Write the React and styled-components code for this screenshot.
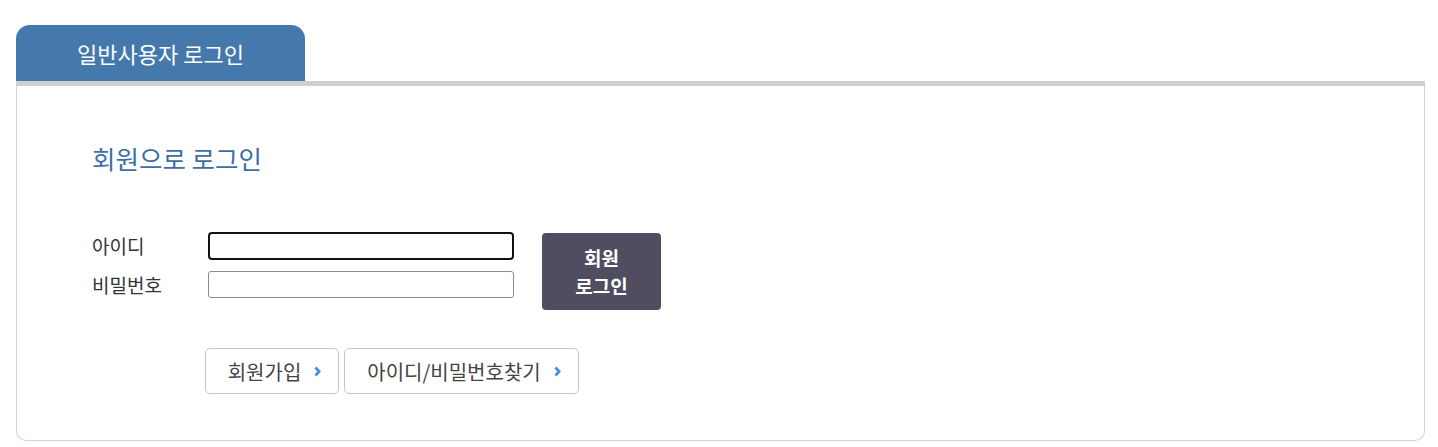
import React from 'react';
import styled, { createGlobalStyle } from 'styled-components';

const GlobalStyle = createGlobalStyle`
  body {
    margin: 0;
    background: #fff;
    font-family: "Noto Sans CJK KR", "Noto Sans", sans-serif;
  }
`;

const Page = styled.div`
  padding: 25px 13px 6px 16px;
`;

const TabBar = styled.div`
  display: flex;
`;

const Tab = styled.div`
  width: 289px;
  height: 56px;
  display: flex;
  align-items: center;
  justify-content: center;
  background: #4579ac;
  color: #fff;
  font-size: 22px;
  border-radius: 14px 14px 0 0;
`;

const Panel = styled.section`
  border: 1px solid #d2d2d2;
  border-top: 5px solid #d0d0d0;
  border-radius: 0 0 10px 10px;
  padding: 57px 0 46px 75px;
`;

const Heading = styled.h2`
  margin: 0;
  font-size: 25.5px;
  line-height: 30px;
  font-weight: normal;
  color: #3d6ea6;
`;

const Form = styled.form`
  display: flex;
  align-items: flex-start;
  margin-top: 59px;
`;

const Fields = styled.div`
  display: grid;
  grid-template-columns: 116px 306px;
  row-gap: 11px;
  align-items: center;
`;

const Label = styled.label`
  font-size: 19px;
  color: #333;
  line-height: 22px;
`;

const Input = styled.input`
  box-sizing: border-box;
  width: 306px;
  height: ${p => (p.$active ? '28px' : '27px')};
  border: ${p => (p.$active ? '2px solid #111' : '1px solid #8a8a8a')};
  border-radius: ${p => (p.$active ? '4px' : '3px')};
  margin: 0;
  padding: 0 4px;
  outline: none;
  background: #fff;
`;

const LoginButton = styled.button`
  width: 119px;
  height: 77px;
  margin: 1px 0 0 28px;
  border: none;
  border-radius: 4px;
  background: #4f4d5f;
  color: #fff;
  font-family: inherit;
  font-size: 19px;
  font-weight: bold;
  line-height: 28px;
  padding: 0;
`;

const Links = styled.div`
  display: flex;
  gap: 5px;
  margin: 38px 0 0 113px;
`;

const LinkButton = styled.button`
  box-sizing: border-box;
  height: 46px;
  width: ${p => p.$w}px;
  display: flex;
  align-items: center;
  justify-content: center;
  gap: 13px;
  padding: 0 0 0 5px;
  border: 1px solid #c6c6c6;
  border-radius: 5px;
  background: #fff;
  color: #444;
  font-family: inherit;
  font-size: 20px;
`;

const Chevron = () => (
  <svg width="7" height="11" viewBox="0 0 7 11">
    <polyline points="1.5,1.5 5.2,5.5 1.5,9.5" fill="none" stroke="#4a8fd0" strokeWidth="2.6" />
  </svg>
);

export default function App() {
  return (
    <Page>
      <GlobalStyle />
      <TabBar>
        <Tab>일반사용자 로그인</Tab>
      </TabBar>
      <Panel>
        <Heading>회원으로 로그인</Heading>
        <Form onSubmit={e => e.preventDefault()}>
          <Fields>
            <Label htmlFor="uid">아이디</Label>
            <Input id="uid" type="text" $active />
            <Label htmlFor="upw">비밀번호</Label>
            <Input id="upw" type="password" />
          </Fields>
          <LoginButton type="submit">
            회원
            <br />
            로그인
          </LoginButton>
        </Form>
        <Links>
          <LinkButton type="button" $w={134}>
            회원가입<Chevron />
          </LinkButton>
          <LinkButton type="button" $w={235}>
            아이디/비밀번호찾기<Chevron />
          </LinkButton>
        </Links>
      </Panel>
    </Page>
  );
}
